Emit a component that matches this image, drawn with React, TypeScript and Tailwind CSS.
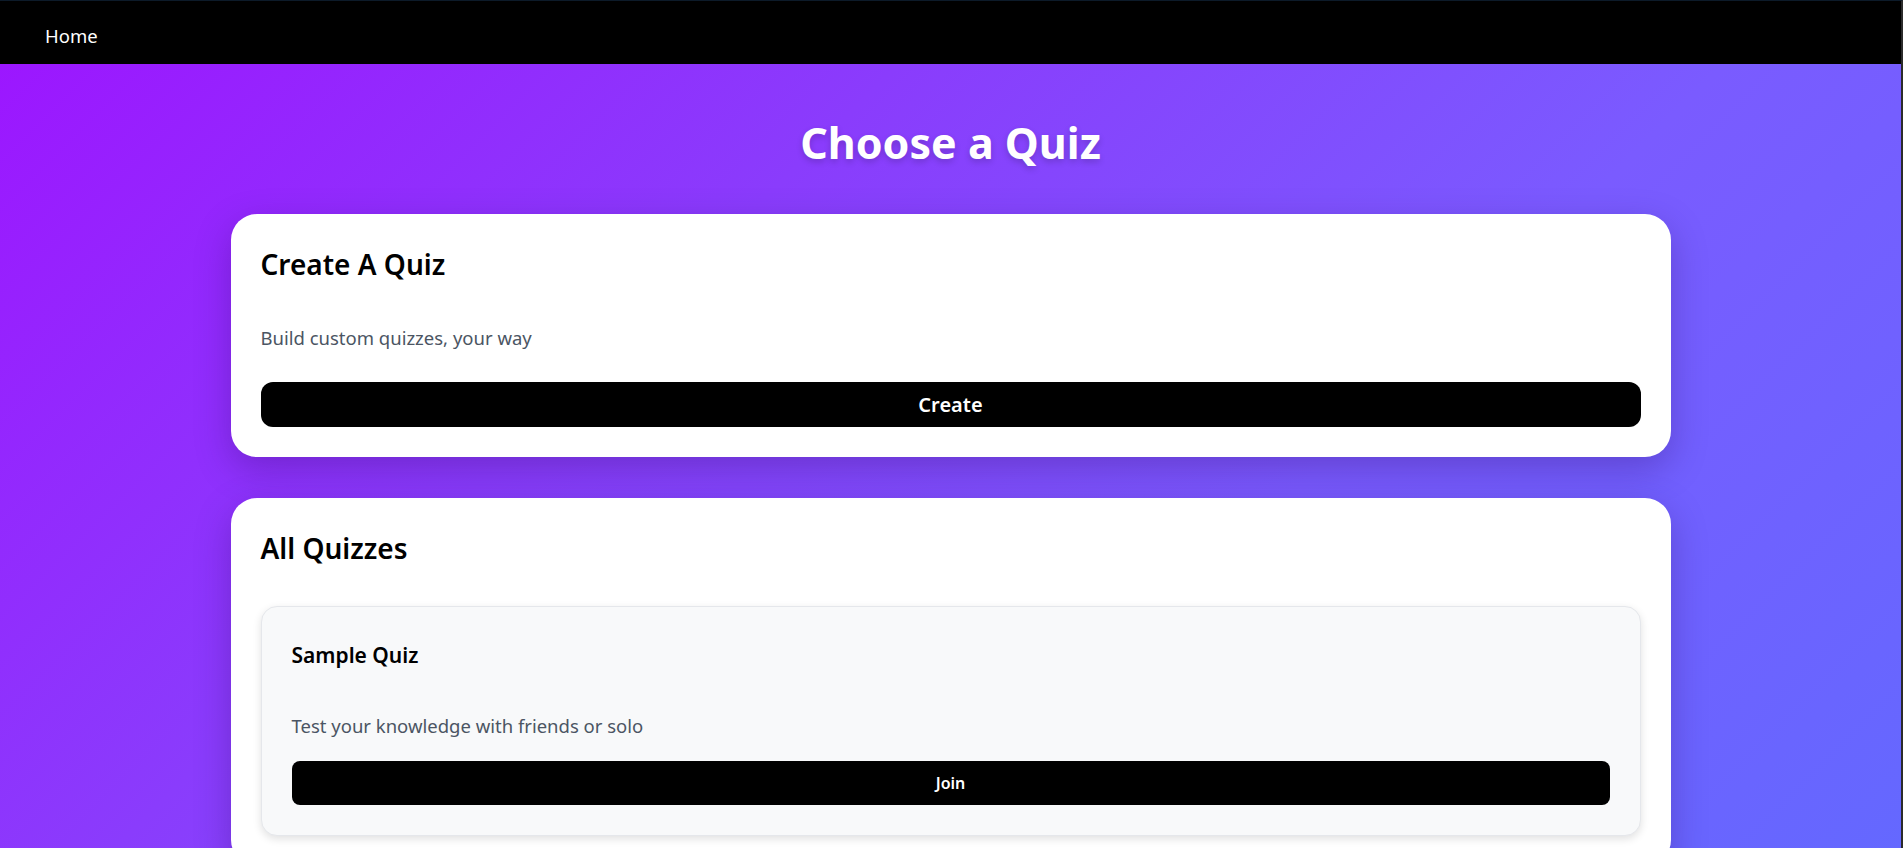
import React from "react";

const quizzes = [
  { title: "Sample Quiz", description: "Test your knowledge with friends or solo" },
];

export default function App() {
  return (
    <div
      className="min-h-screen bg-fixed bg-[linear-gradient(135deg,#9d14ff_0%,#8a3cfc_35%,#7a5bff_65%,#6468ff_100%)] border-t border-t-[#0c1a29] border-r-2 border-r-[#2b2b2b]"
      style={{ fontFamily: '"Noto Sans", "Open Sans", sans-serif' }}
    >
      {/* Top nav */}
      <nav className="h-[63px] bg-black flex items-center px-[45px] pt-[8px]">
        <a className="text-white text-[18.5px] leading-none">Home</a>
      </nav>

      <main className="px-4 pt-[53px] pb-16">
        <h1 className="text-center text-white font-bold text-[43px] leading-[1.2] mb-[45px] [text-shadow:0_3px_6px_rgba(0,0,0,0.18)]">
          Choose a Quiz
        </h1>

        <div className="max-w-[1440px] mx-auto flex flex-col gap-[41px]">
          {/* Create card */}
          <section className="bg-white rounded-[26px] p-[30px] shadow-[0_12px_36px_rgba(40,0,90,0.28)]">
            <h2 className="mt-[3px] text-[28px] font-semibold leading-[1.25] text-black mb-[42px]">Create A Quiz</h2>
            <p className="text-[18.5px] leading-[1.5] text-[#4b5563] mb-[31px]">Build custom quizzes, your way</p>
            <button className="w-full h-[45px] rounded-xl bg-black text-white text-[20px] font-semibold">
              Create
            </button>
          </section>

          {/* All quizzes card */}
          <section className="bg-white rounded-[26px] p-[30px] shadow-[0_12px_36px_rgba(40,0,90,0.28)]">
            <h2 className="mt-[3px] text-[28px] font-semibold leading-[1.25] text-black mb-[40px]">All Quizzes</h2>
            <div className="flex flex-col gap-6">
              {quizzes.map((q) => (
                <div
                  key={q.title}
                  className="bg-[#f8f9fa] border border-[#e5e7eb] rounded-2xl px-[30px] pt-[34px] pb-[30px] shadow-[0_3px_8px_rgba(0,0,0,0.12)]"
                >
                  <h3 className="text-[21px] font-semibold leading-[1.4] text-black mb-[41px]">{q.title}</h3>
                  <p className="text-[18.5px] leading-[1.5] text-[#4b5563] mb-[22px]">{q.description}</p>
                  <button className="w-full h-[44px] rounded-lg bg-black text-white text-[16px] font-semibold">
                    Join
                  </button>
                </div>
              ))}
            </div>
          </section>
        </div>
      </main>
    </div>
  );
}
